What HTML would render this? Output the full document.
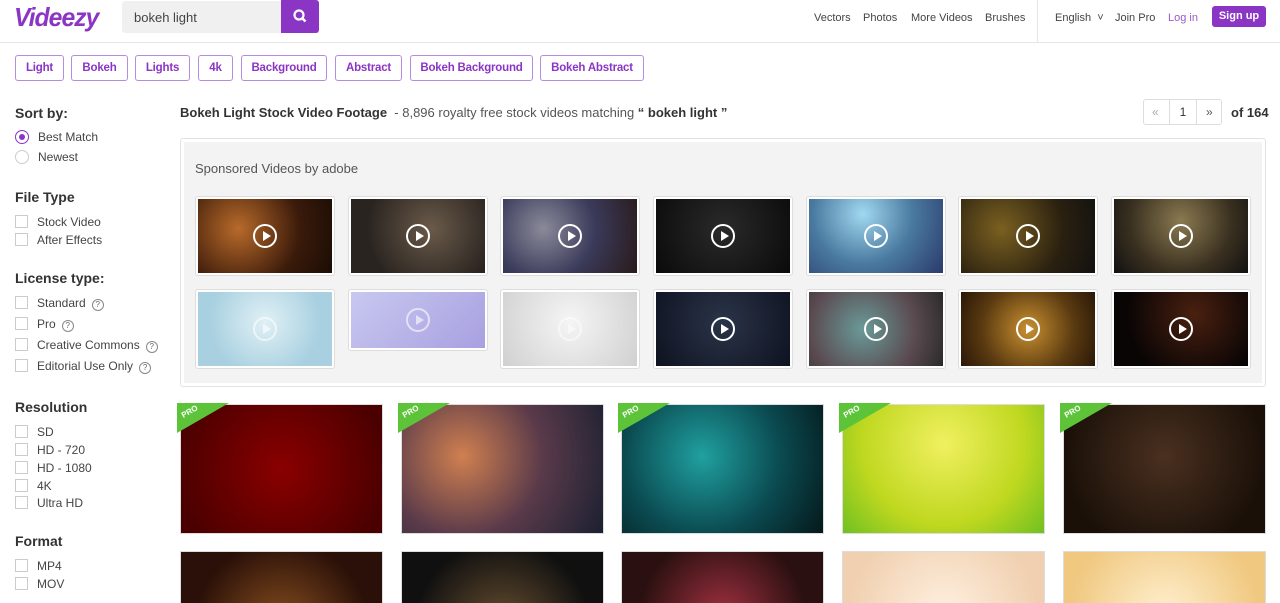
<!DOCTYPE html>
<html><head><meta charset="utf-8"><style>
*{box-sizing:border-box;margin:0;padding:0}
html,body{width:1280px;height:603px;overflow:hidden}
body{background:#fff;font-family:"Liberation Sans",sans-serif;color:#333;position:relative}
.a{position:absolute}
.logo{left:14px;top:0;font:italic bold 26px "Liberation Sans",sans-serif;color:#8b35c4;letter-spacing:-1px;line-height:34px;transform:scaleX(0.95);transform-origin:0 0}
.search{left:122px;top:1px;width:196px;height:32px;background:#f0f0f0;border-radius:3px;font-size:13px;color:#444;padding:9px 0 0 12px}
.sbtn{left:281px;top:0;width:38px;height:33px;background:#8b35c4;border-radius:0 3px 3px 0}
.nav{top:12px;font-size:11px;color:#444}
.hdr{left:0;top:42px;width:1280px;height:1px;background:#e6e6e6}
.vsep{left:1037px;top:0;width:1px;height:42px;background:#e6e6e6}
.signup{left:1212px;top:6px;width:54px;height:21px;background:#8b35c4;border-radius:3px;color:#fff;font-size:11px;font-weight:bold;text-align:center;line-height:21px}
.tag{top:55px;height:26px;border:1px solid #b68ce0;border-radius:3px;color:#8b35c4;font-size:11.5px;font-weight:bold;line-height:24px;text-align:center;letter-spacing:-0.2px}
.h{font-size:14px;font-weight:bold;color:#333;left:15px}
.opt{left:15px;font-size:12px;color:#444;line-height:14px}
.cb{display:inline-block;width:13px;height:13px;border:1px solid #ccc;vertical-align:-2px;margin-right:9px}
.rd{display:inline-block;width:14px;height:14px;border:1px solid #ccc;border-radius:50%;vertical-align:-3px;margin-right:9px;position:relative}
.q{display:inline-block;width:12px;height:12px;border:1px solid #888;border-radius:50%;font-size:8px;text-align:center;line-height:10px;color:#666;margin-left:6px;vertical-align:0}
.card{background:#fff;border:1px solid #ddd;border-radius:3px;padding:2px;width:140px}
.card div{height:74px;position:relative}
.pl{position:absolute;left:50%;top:50%;width:24px;height:24px;margin:-12px;border:2px solid #fff;border-radius:50%}
.pl:after{content:"";position:absolute;left:8px;top:5px;border-left:8px solid #fff;border-top:5px solid transparent;border-bottom:5px solid transparent}
.th{width:203px;height:130px;border:1px solid #ddd}
.pro{width:52px;height:30px;background:#5dc43a;clip-path:polygon(0 0,100% 0,0 100%)}
.pt{color:#fff;font-size:8px;font-weight:bold;transform:rotate(-30deg)}
</style></head><body>
<div class="a logo">Videezy</div>
<div class="a search">bokeh light</div>
<div class="a sbtn"><svg width="38" height="33"><circle cx="18" cy="15" r="4.5" fill="none" stroke="#fff" stroke-width="2.2"/><line x1="21" y1="18" x2="24.5" y2="21.5" stroke="#fff" stroke-width="2.6"/></svg></div>
<div class="a nav" style="left:814px">Vectors</div>
<div class="a nav" style="left:863px">Photos</div>
<div class="a nav" style="left:911px">More Videos</div>
<div class="a nav" style="left:985px">Brushes</div>
<div class="a vsep"></div>
<div class="a nav" style="left:1055px">English &nbsp;˅</div>
<div class="a nav" style="left:1115px">Join Pro</div>
<div class="a nav" style="left:1168px;color:#9b59c8">Log in</div>
<div class="a signup">Sign up</div>
<div class="a hdr"></div>

<div class="a tag" style="left:15px;width:49px">Light</div>
<div class="a tag" style="left:71px;width:57px">Bokeh</div>
<div class="a tag" style="left:135px;width:55px">Lights</div>
<div class="a tag" style="left:198px;width:35px">4k</div>
<div class="a tag" style="left:241px;width:86px">Background</div>
<div class="a tag" style="left:335px;width:67px">Abstract</div>
<div class="a tag" style="left:410px;width:123px">Bokeh Background</div>
<div class="a tag" style="left:540px;width:104px">Bokeh Abstract</div>

<div class="a h" style="top:105px">Sort by:</div>
<div class="a opt" style="top:130px"><span class="rd" style="border-color:#8b35c4"><span style="position:absolute;left:3px;top:3px;width:6px;height:6px;border-radius:50%;background:#8b35c4"></span></span>Best Match</div>
<div class="a opt" style="top:150px"><span class="rd"></span>Newest</div>
<div class="a h" style="top:189px">File Type</div>
<div class="a opt" style="top:215px"><span class="cb"></span>Stock Video</div>
<div class="a opt" style="top:233px"><span class="cb"></span>After Effects</div>
<div class="a h" style="top:270px">License type:</div>
<div class="a opt" style="top:296px"><span class="cb"></span>Standard<span class="q">?</span></div>
<div class="a opt" style="top:317px"><span class="cb"></span>Pro<span class="q">?</span></div>
<div class="a opt" style="top:338px"><span class="cb"></span>Creative Commons<span class="q">?</span></div>
<div class="a opt" style="top:359px"><span class="cb"></span>Editorial Use Only<span class="q">?</span></div>
<div class="a h" style="top:399px">Resolution</div>
<div class="a opt" style="top:425px"><span class="cb"></span>SD</div>
<div class="a opt" style="top:443px"><span class="cb"></span>HD - 720</div>
<div class="a opt" style="top:461px"><span class="cb"></span>HD - 1080</div>
<div class="a opt" style="top:479px"><span class="cb"></span>4K</div>
<div class="a opt" style="top:496px"><span class="cb"></span>Ultra HD</div>
<div class="a h" style="top:533px">Format</div>
<div class="a opt" style="top:559px"><span class="cb"></span>MP4</div>
<div class="a opt" style="top:577px"><span class="cb"></span>MOV</div>

<div class="a" style="left:180px;top:105px;font-size:13px;color:#555"><b style="color:#333">Bokeh Light Stock Video Footage</b> &nbsp;- 8,896 royalty free stock videos matching <b style="color:#333">“ bokeh light ”</b></div>
<div class="a" style="left:1143px;top:99px;width:79px;height:26px;border:1px solid #ddd;border-radius:3px;font-size:12px;line-height:24px;color:#aaa">
<span style="position:absolute;left:8px">«</span><span style="position:absolute;left:25px;width:28px;height:24px;border-left:1px solid #ddd;border-right:1px solid #ddd;text-align:center;color:#333">1</span><span style="position:absolute;left:62px;color:#555">»</span></div>
<div class="a" style="left:1231px;top:105px;font-size:13px;font-weight:bold;color:#333">of 164</div>

<div class="a" style="left:180px;top:138px;width:1086px;height:249px;border:1px solid #e2e2e2;border-radius:3px;padding:3px">
<div style="background:#f3f3f3;width:100%;height:100%"></div></div>
<div class="a" style="left:195px;top:161px;font-size:13px;color:#555">Sponsored Videos by adobe</div>

<div class="a" style="left:195px;top:196px;display:grid;grid-template-columns:repeat(7,140px);column-gap:12.7px;row-gap:13px">
<div class="card"><div style="background:radial-gradient(circle at 30% 40%,#b86a2a,#3a1a0a 60%,#1a0d05)"><span class="pl"></span></div></div>
<div class="card"><div style="background:radial-gradient(circle at 60% 40%,#6a5a4a,#2a2420 70%)"><span class="pl"></span></div></div>
<div class="card"><div style="background:radial-gradient(circle at 30% 40%,#8a8a9a,#3a3a5a 50%,#2a1a1a)"><span class="pl"></span></div></div>
<div class="card"><div style="background:radial-gradient(circle at 50% 40%,#2a2a2a,#0a0a0a)"><span class="pl"></span></div></div>
<div class="card"><div style="background:radial-gradient(circle at 40% 20%,#a0d8f0,#4a7aa0 50%,#2a3a6a)"><span class="pl"></span></div></div>
<div class="card"><div style="background:radial-gradient(circle at 30% 40%,#7a6020,#2a2010 60%,#111)"><span class="pl"></span></div></div>
<div class="card"><div style="background:radial-gradient(circle at 50% 30%,#8a7a50,#3a3020 60%,#111)"><span class="pl"></span></div></div>
<div class="card"><div style="background:radial-gradient(circle at 50% 40%,#e0f0f5,#a8d0e0 70%)"><span class="pl" style="opacity:.6"></span></div></div>
<div class="card" style="height:62px"><div style="height:56px;background:linear-gradient(135deg,#c8c8f0,#a8a0e0)"><span class="pl" style="opacity:.6"></span></div></div>
<div class="card"><div style="background:radial-gradient(circle at 50% 40%,#f5f5f5,#d0d0d0)"><span class="pl" style="opacity:.5"></span></div></div>
<div class="card"><div style="background:radial-gradient(circle at 50% 40%,#2a3448,#0e1220)"><span class="pl"></span></div></div>
<div class="card"><div style="background:radial-gradient(circle at 40% 50%,#6a9a98,#5a4a50 60%,#2a2a2a)"><span class="pl"></span></div></div>
<div class="card"><div style="background:radial-gradient(circle at 50% 50%,#c89030,#5a3a10 60%,#2a1808)"><span class="pl"></span></div></div>
<div class="card"><div style="background:radial-gradient(circle at 60% 30%,#4a2010,#0a0505 70%)"><span class="pl"></span></div></div>
</div>

<div class="a th" style="left:180px;top:404px;background:radial-gradient(circle at 50% 50%,#8a0000,#4a0000 90%)"></div>
<div class="a th" style="left:401px;top:404px;background:radial-gradient(circle at 30% 40%,#d08050,#5a3a4a 50%,#1a2030)"></div>
<div class="a th" style="left:621px;top:404px;background:radial-gradient(circle at 40% 40%,#20a0a0,#0a4a50 55%,#05181a)"></div>
<div class="a th" style="left:842px;top:404px;background:radial-gradient(circle at 50% 30%,#f0f060,#c0d820 60%,#70c020)"></div>
<div class="a th" style="left:1063px;top:404px;background:radial-gradient(circle at 50% 40%,#4a3020,#1a1008 80%)"></div>
<div class="a pro" style="left:177px;top:403px"></div>
<div class="a pro" style="left:398px;top:403px"></div>
<div class="a pro" style="left:618px;top:403px"></div>
<div class="a pro" style="left:839px;top:403px"></div>
<div class="a pro" style="left:1060px;top:403px"></div>
<div class="a pt" style="left:181px;top:407px">PRO</div>
<div class="a pt" style="left:402px;top:407px">PRO</div>
<div class="a pt" style="left:622px;top:407px">PRO</div>
<div class="a pt" style="left:843px;top:407px">PRO</div>
<div class="a pt" style="left:1064px;top:407px">PRO</div>

<div class="a th" style="left:180px;top:551px;background:radial-gradient(circle at 50% 60%,#8a5020,#2a1008 70%)"></div>
<div class="a th" style="left:401px;top:551px;background:radial-gradient(circle at 50% 60%,#6a5030,#101010 70%)"></div>
<div class="a th" style="left:621px;top:551px;background:radial-gradient(circle at 50% 50%,#a03040,#2a1010 70%)"></div>
<div class="a th" style="left:842px;top:551px;background:radial-gradient(circle at 50% 50%,#fff0e0,#f0d0b0 80%)"></div>
<div class="a th" style="left:1063px;top:551px;background:radial-gradient(circle at 50% 50%,#fff0d0,#f0c880 80%)"></div>
</body></html>
